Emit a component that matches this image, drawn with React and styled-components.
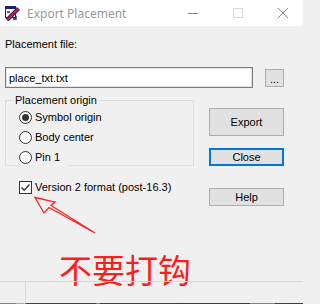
import styled, { createGlobalStyle } from "styled-components"

const GlobalStyle = createGlobalStyle`
    html, body {
        margin: 0;
        padding: 0;
        background: #f0f0f0;
    }
    * {
        box-sizing: border-box;
    }
`;

const Window = styled.div`
    position: relative;
    width: 303px;
    height: 304px;
    display: flex;
    flex-direction: column;
    overflow: hidden;
    background: #f0f0f0;
    font-family: "Liberation Sans", Arial, sans-serif;
    font-size: 11px;
    color: #000;
`;

const TitleBar = styled.div`
    height: 26px;
    flex: none;
    display: flex;
    align-items: center;
    padding-left: 4px;
    background: #fff;
`;

const Title = styled.span`
    margin-left: 7px;
    font-family: "Noto Sans", "Open Sans", sans-serif;
    font-size: 12px;
    color: #999;
`;

const Controls = styled.div`
    display: flex;
    margin-left: auto;
    margin-right: -2px;
`;

const ControlButton = styled.div`
    width: 45px;
    height: 26px;
    display: flex;
    align-items: center;
    justify-content: center;
`;

const Body = styled.div`
    height: 255px;
    flex: none;
    display: flex;
    flex-direction: column;
    padding: 12px 19px 0 5px;
`;

const Label = styled.div`
    line-height: 13px;
`;

const FileRow = styled.div`
    display: flex;
    align-items: center;
    margin-top: 16px;
`;

const FileInput = styled.input`
    width: 248px;
    height: 21px;
    padding: 0 0 0 3px;
    border: 1px solid #7a7a7a;
    box-shadow: inset 0 0 0 1px #e3e3e3;
    background: #fff;
    font-family: "Liberation Sans", Arial, sans-serif;
    font-size: 11px;
    color: #000;
    outline: none;
`;

const Button = styled.div`
    width: ${({ $w }) => $w || 75}px;
    height: ${({ $h }) => $h || 18}px;
    margin-top: ${({ $mt }) => $mt || 0}px;
    margin-left: ${({ $ml }) => $ml || 0}px;
    display: flex;
    align-items: center;
    justify-content: center;
    background: #e1e1e1;
    border: ${({ $default }) => ($default ? "2px solid #0078d7" : "1px solid #adadad")};
    line-height: 13px;
`;

const Dots = styled.span`
    margin-top: 4px;
`;

const Main = styled.div`
    display: flex;
    margin-top: 6px;
`;

const LeftColumn = styled.div`
    display: flex;
    flex-direction: column;
`;

const RightColumn = styled.div`
    display: flex;
    flex-direction: column;
    margin-left: 15px;
    padding-top: 14px;
`;

const GroupBox = styled.fieldset`
    width: 189px;
    height: 72px;
    margin: 0;
    padding: 0 0 0 12px;
    border: 1px solid #dcdcdc;
    overflow: visible;
`;

const Legend = styled.legend`
    margin-left: -5px;
    padding: 0 2px;
    line-height: 13px;
`;

const OptionRow = styled.div`
    display: flex;
    align-items: center;
    width: fit-content;
    height: 20px;
    padding-right: 8px;
    background: #f0f0f0;
    position: relative;
`;

const Radio = styled.span`
    width: 13px;
    height: 13px;
    margin-left: 1px;
    margin-right: 3px;
    border: 1px solid #333;
    border-radius: 50%;
    background: #fff;
    display: flex;
    align-items: center;
    justify-content: center;
    &::after {
        content: "";
        display: ${({ $checked }) => ($checked ? "block" : "none")};
        width: 7px;
        height: 7px;
        border-radius: 50%;
        background: #333;
    }
`;

const CheckRow = styled.div`
    display: flex;
    align-items: center;
    height: 20px;
    margin-top: 11px;
    margin-left: 14px;
`;

const CheckBox = styled.span`
    width: 13px;
    height: 13px;
    margin-right: 3px;
    border: 1px solid #333;
    background: #fff;
    display: flex;
    align-items: center;
    justify-content: center;
`;

const Note = styled.div`
    margin-top: 47px;
    margin-left: 54px;
    font-family: "Noto Sans CJK SC", sans-serif;
    font-size: 33px;
    line-height: 33px;
    color: #ff1c1c;
    white-space: nowrap;
`;

const StatusBar = styled.div`
    height: 22px;
    flex: none;
    display: flex;
    border-top: 1px solid #d7d7d7;
`;

const StatusPane = styled.div`
    width: 26px;
    border-right: 1px solid #d7d7d7;
`;

const Desktop = styled.div`
    height: 1px;
    flex: none;
    background: linear-gradient(90deg, #8c7f80 0 16px, #a9a9a9 16px 26px, #2f4d31 26px 96px, #5aa05a 96px 100px, #2f4d31 100px 180px, #3c3c3c 180px 250px, #5aa05a 250px 275px, #2f4d31 275px 295px, #3c3c3c 295px);
`;

const Arrow = styled.svg`
    position: absolute;
    left: 0;
    top: 0;
    pointer-events: none;
`;

const AppIcon = () => (
    <svg width="16" height="16" viewBox="0 0 16 16">
        <rect x="1.5" y="1.5" width="10" height="11" fill="#fff" stroke="#1b1f7a" />
        <rect x="1" y="1" width="11" height="3" fill="#1b1f7a" />
        <rect x="3" y="6" width="3" height="2" fill="#3b5bd0" />
        <path d="M3 15 L14.5 3.5" stroke="#1b1f7a" strokeWidth="4" />
        <path d="M3 15 L14.5 3.5" stroke="#ff1010" strokeWidth="2.2" />
        <path d="M9 14 L12 14 L12 11" fill="none" stroke="#1b1f7a" strokeWidth="1.4" />
    </svg>
);

const App = () => {
    return (
        <>
            <GlobalStyle />
            <Window>
                <TitleBar>
                    <AppIcon />
                    <Title>Export Placement</Title>
                    <Controls>
                        <ControlButton>
                            <svg width="10" height="10" viewBox="0 0 10 10">
                                <path d="M0 5.5 H10" stroke="#8a8a8a" />
                            </svg>
                        </ControlButton>
                        <ControlButton>
                            <svg width="10" height="10" viewBox="0 0 10 10">
                                <rect x="0.5" y="0.5" width="9" height="9" fill="none" stroke="#d9d9d9" />
                            </svg>
                        </ControlButton>
                        <ControlButton>
                            <svg width="10" height="10" viewBox="0 0 10 10">
                                <path d="M0 0 L10 10 M10 0 L0 10" stroke="#8a8a8a" />
                            </svg>
                        </ControlButton>
                    </Controls>
                </TitleBar>

                <Body>
                    <Label>Placement file:</Label>
                    <FileRow>
                        <FileInput readOnly defaultValue="place_txt.txt" />
                        <Button $w={19} $ml={12}><Dots>...</Dots></Button>
                    </FileRow>

                    <Main>
                        <LeftColumn>
                            <GroupBox>
                                <Legend>Placement origin</Legend>
                                <OptionRow><Radio $checked />Symbol origin</OptionRow>
                                <OptionRow><Radio />Body center</OptionRow>
                                <OptionRow><Radio />Pin 1</OptionRow>
                            </GroupBox>
                            <CheckRow>
                                <CheckBox>
                                    <svg width="11" height="11" viewBox="0 0 11 11">
                                        <path d="M1.5 5.5 L4.2 8.3 L9.5 2.5" fill="none" stroke="#333" strokeWidth="1.3" />
                                    </svg>
                                </CheckBox>
                                Version 2 format (post-16.3)
                            </CheckRow>
                        </LeftColumn>
                        <RightColumn>
                            <Button $h={28}>Export</Button>
                            <Button $mt={12} $default>Close</Button>
                            <Button $mt={22}>Help</Button>
                        </RightColumn>
                    </Main>

                    <Note>不要打钩</Note>
                </Body>

                <StatusBar>
                    <StatusPane />
                </StatusBar>
                <Desktop />

                <Arrow width="303" height="304" viewBox="0 0 303 304">
                    <polygon
                        points="35,197.5 55,202 51,205.5 95,233 49,207.5 44,213"
                        fill="none"
                        stroke="#ff2020"
                        strokeWidth="1.3"
                    />
                </Arrow>
            </Window>
        </>
    )
}

export default App
